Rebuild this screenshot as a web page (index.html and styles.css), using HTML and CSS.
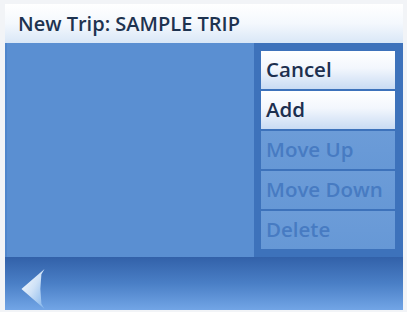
FILE: index.html
```html
<!DOCTYPE html>
<html>
<head>
<meta charset="utf-8">
<link rel="stylesheet" href="styles.css">
</head>
<body>
<div class="screen">
  <div class="header">New Trip: SAMPLE TRIP</div>
  <div class="main">
    <div class="list"></div>
    <div class="panel">
      <div class="btn on">Cancel</div>
      <div class="btn on">Add</div>
      <div class="btn off">Move Up</div>
      <div class="btn off">Move Down</div>
      <div class="btn off">Delete</div>
    </div>
  </div>
  <div class="footer">
    <svg class="back" width="26" height="40" viewBox="0 0 26 40">
      <defs>
        <linearGradient id="g" x1="0" y1="0" x2="1" y2="1">
          <stop offset="0" stop-color="#ffffff"/>
          <stop offset="0.5" stop-color="#cfe2f7"/>
          <stop offset="1" stop-color="#7fb2ea"/>
        </linearGradient>
      </defs>
      <path d="M24 1 L21 6 L20 20 L21 34 L24 39 L2 20 Z" fill="url(#g)"/>
    </svg>
  </div>
</div>
</body>
</html>
```

FILE: styles.css
```css
html, body { margin: 0; padding: 0; }
body {
  width: 407px;
  height: 312px;
  background: #f2f4f7;
  font-family: "Open Sans", "DejaVu Sans", sans-serif;
  overflow: hidden;
}
.screen {
  margin: 4px 0 0 5px;
  width: 398px;
  height: 306px;
  display: flex;
  flex-direction: column;
}
.header {
  height: 39px;
  box-sizing: border-box;
  padding: 7px 0 0 13px;
  background: linear-gradient(#ffffff 0%, #f4f8fd 50%, #d9e7f7 100%);
  color: #1e3350;
  font-size: 20px;
  font-weight: 600;
  letter-spacing: 0;
  line-height: 26px;
}
.main {
  height: 217px;
  display: flex;
  background: #5a8fd2;
}
.list {
  flex: 1;
  border-left: 2px solid #4f86cc;
}
.panel {
  width: 149px;
  box-sizing: border-box;
  background: #3d72bb;
  padding: 8px 8px 0 7px;
  display: flex;
  flex-direction: column;
  gap: 2px;
}
.btn {
  height: 38px;
  box-sizing: border-box;
  padding: 5px 0 0 5px;
  font-size: 20.5px;
  font-weight: 600;
  line-height: 26px;
  letter-spacing: 0;
  white-space: nowrap;
}
.btn.on {
  background: linear-gradient(#ffffff 0%, #f3f7fd 45%, #c9dbf3 100%);
  color: #1c2f4f;
}
.btn.off {
  background: linear-gradient(#6c9cd8 0%, #6698d6 100%);
  color: #477bc2;
}
.footer {
  flex: 1;
  background: linear-gradient(#3261a9 0%, #4a7fc6 50%, #72a5e6 100%);
  padding: 11px 0 0 14px;
}
.back { display: block; width: 28px; height: 42px; }
```
